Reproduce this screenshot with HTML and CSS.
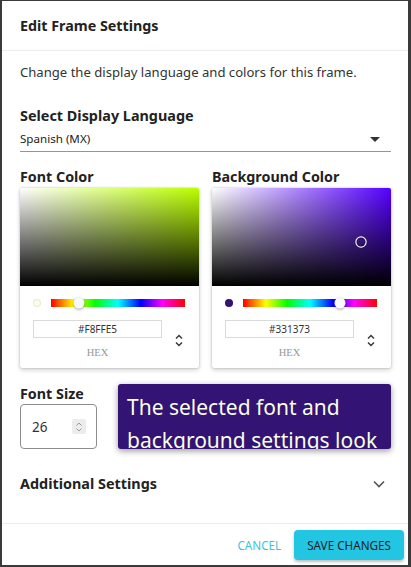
FILE: index.html
```html
<!DOCTYPE html>
<html lang="en">
<head>
<meta charset="utf-8">
<title>Edit Frame Settings</title>
<link rel="stylesheet" href="styles.css">
</head>
<body>
<div class="dialog">
  <div class="header">Edit Frame Settings</div>
  <div class="content">
    <p class="desc">Change the display language and colors for this frame.</p>
    <div class="section-label">Select Display Language</div>
    <div class="select">
      <span>Spanish (MX)</span>
      <span class="caret"></span>
    </div>

    <div class="colors">
      <div class="color-col">
        <div class="col-label">Font Color</div>
        <div class="picker">
          <div class="sat" style="background: linear-gradient(to top, #000, rgba(0,0,0,0)), linear-gradient(to right, #fff, hsl(76, 100%, 50%));"></div>
          <div class="controls">
            <div class="hue-row">
              <span class="swatch" style="background: #F8FFE5;"></span>
              <div class="hue">
                <span class="hue-thumb" style="left: 21%;"></span>
              </div>
            </div>
            <div class="fields">
              <div class="field">
                <div class="hex-input">#F8FFE5</div>
                <div class="hex-label">HEX</div>
              </div>
              <div class="toggle">
                <svg width="8" height="13" viewBox="0 0 8 13"><path d="M1 4.5 L4 1.5 L7 4.5" fill="none" stroke="#333" stroke-width="1.4"/><path d="M1 8.5 L4 11.5 L7 8.5" fill="none" stroke="#333" stroke-width="1.4"/></svg>
              </div>
            </div>
          </div>
        </div>
      </div>
      <div class="color-col">
        <div class="col-label">Background Color</div>
        <div class="picker">
          <div class="sat" style="background: linear-gradient(to top, #000, rgba(0,0,0,0)), linear-gradient(to right, #fff, hsl(260, 100%, 50%));">
            <span class="sat-marker" style="left: 149px; top: 54px;"></span>
          </div>
          <div class="controls">
            <div class="hue-row">
              <span class="swatch" style="background: #331373;"></span>
              <div class="hue">
                <span class="hue-thumb" style="left: 72.2%;"></span>
              </div>
            </div>
            <div class="fields">
              <div class="field">
                <div class="hex-input">#331373</div>
                <div class="hex-label">HEX</div>
              </div>
              <div class="toggle">
                <svg width="8" height="13" viewBox="0 0 8 13"><path d="M1 4.5 L4 1.5 L7 4.5" fill="none" stroke="#333" stroke-width="1.4"/><path d="M1 8.5 L4 11.5 L7 8.5" fill="none" stroke="#333" stroke-width="1.4"/></svg>
              </div>
            </div>
          </div>
        </div>
      </div>
    </div>

    <div class="size-row">
      <div class="size-col">
        <div class="col-label">Font Size</div>
        <div class="num-input">
          <span>26</span>
          <span class="spinner">
            <svg width="8" height="12" viewBox="0 0 8 12"><path d="M1.5 4.5 L4 2 L6.5 4.5" fill="none" stroke="#9a9a9a" stroke-width="1"/><path d="M1.5 7.5 L4 10 L6.5 7.5" fill="none" stroke="#9a9a9a" stroke-width="1"/></svg>
          </span>
        </div>
      </div>
      <div class="preview">The selected font and background settings look like this.</div>
    </div>

    <div class="additional">
      <span>Additional Settings</span>
      <svg class="chev" width="12" height="8" viewBox="0 0 12 8"><path d="M1 1.5 L6 6.5 L11 1.5" fill="none" stroke="#555" stroke-width="1.6"/></svg>
    </div>
  </div>
  <div class="footer">
    <button class="btn-text">Cancel</button>
    <button class="btn-primary">Save Changes</button>
  </div>
</div>
</body>
</html>
```

FILE: styles.css
```css
html, body {
  margin: 0;
  padding: 0;
}
body {
  background: #3a3a3a;
  width: 411px;
  height: 567px;
  overflow: hidden;
  font-family: "Noto Sans", "Open Sans", sans-serif;
  color: #222;
}
.dialog {
  margin: 1px 3px 0 2px;
  width: 406px;
  height: 564px;
  background: #fff;
  display: flex;
  flex-direction: column;
  box-sizing: border-box;
}
.header {
  height: 49px;
  border-bottom: 1px solid #ececec;
  padding-left: 18px;
  display: flex;
  align-items: center;
  font-size: 14.3px;
  font-weight: 700;
  color: #222;
}
.content {
  flex: 1;
  padding: 0 17px 0 18px;
}
.desc {
  margin: 11px 0 0;
  font-size: 13.1px;
  line-height: 20px;
  color: #333;
}
.section-label {
  margin-top: 23px;
  font-size: 14.4px;
  line-height: 22px;
  font-weight: 700;
}
.select {
  margin-top: 3px;
  display: flex;
  justify-content: space-between;
  align-items: center;
  font-size: 11.6px;
  line-height: 18px;
  padding-bottom: 3px;
  border-bottom: 1px solid #8f94ab;
  color: #222;
}
.caret {
  width: 0;
  height: 0;
  border-left: 5px solid transparent;
  border-right: 5px solid transparent;
  border-top: 5px solid #333;
  margin-right: 11px;
}
.colors {
  display: grid;
  grid-template-columns: 179px 179px;
  column-gap: 13px;
  margin-top: 15px;
}
.col-label {
  font-size: 14.3px;
  line-height: 20px;
  font-weight: 700;
  margin-bottom: 1px;
}
.picker {
  width: 179px;
  height: 180px;
  background: #fff;
  border-radius: 2px;
  box-shadow: 0 0 2px rgba(0,0,0,0.25), 0 2px 5px rgba(0,0,0,0.18);
  overflow: hidden;
}
.sat {
  position: relative;
  height: 98px;
  overflow: hidden;
}
.sat-marker {
  position: absolute;
  width: 9px;
  height: 9px;
  border-radius: 50%;
  transform: translate(-50%, -50%);
  box-shadow: 0 0 0 1.2px #fff, inset 0 0 1px 1px rgba(0,0,0,0.3);
}
.controls {
  padding: 13px 14px 9px 13px;
}
.hue-row {
  display: flex;
  align-items: center;
  height: 8px;
}
.swatch {
  width: 8px;
  height: 8px;
  border-radius: 50%;
  flex: none;
  box-shadow: inset 0 0 0 1px rgba(0,0,0,0.08);
}
.hue {
  position: relative;
  flex: 1;
  height: 8px;
  margin-left: 10px;
  background: linear-gradient(to right, #f00 0%, #ff0 17%, #0f0 33%, #0ff 50%, #00f 67%, #f0f 83%, #f00 100%);
}
.hue-thumb {
  position: absolute;
  top: 50%;
  width: 11px;
  height: 11px;
  border-radius: 50%;
  background: #f8f8f8;
  transform: translate(-50%, -50%);
  box-shadow: 0 1px 3px rgba(0,0,0,0.37);
}
.fields {
  display: flex;
  margin-top: 13px;
  margin-right: -11px;
}
.field {
  flex: 0 0 129px;
}
.hex-input {
  height: 18px;
  line-height: 18px;
  box-shadow: inset 0 0 0 1px #dadada;
  text-align: center;
  font-size: 10px;
  color: #333;
}
.hex-label {
  margin-top: 8px;
  font-family: "Liberation Serif", serif;
  font-size: 10.5px;
  line-height: 14px;
  color: #969696;
  text-align: center;
}
.toggle {
  flex: 1;
  display: flex;
  justify-content: center;
  padding-top: 14px;
}
.size-row {
  display: flex;
  gap: 21px;
  margin-top: 16px;
}
.size-col {
  flex: none;
  width: 77px;
}
.size-col .col-label {
  margin-bottom: 0;
}
.num-input {
  box-sizing: border-box;
  height: 45px;
  border: 1px solid #8c8c8c;
  border-radius: 4px;
  padding-left: 11px;
  display: flex;
  align-items: center;
  font-size: 13.5px;
  color: #333;
}
.spinner {
  margin-left: auto;
  margin-right: 10px;
  width: 14px;
  height: 15px;
  background: #ececec;
  border-radius: 2px;
  display: flex;
  align-items: center;
  justify-content: center;
}
.preview {
  flex: 1;
  height: 65px;
  box-sizing: border-box;
  padding: 7px 9px 6px;
  background: #331373;
  color: #F8FFE5;
  font-size: 21px;
  line-height: 33px;
  overflow: hidden;
  border-radius: 3px;
  box-shadow: 0 2px 6px rgba(0,0,0,0.4);
}
.additional {
  margin-top: 25px;
  display: flex;
  justify-content: space-between;
  align-items: center;
  font-size: 14.4px;
  line-height: 20px;
  font-weight: 700;
}
.chev {
  margin-right: 6px;
}
.footer {
  border-top: 1px solid #ececec;
  padding: 6px 4px 5px;
  display: flex;
  justify-content: flex-end;
  align-items: center;
  gap: 5px;
}
button {
  font-family: "Noto Sans", "Open Sans", sans-serif;
  text-transform: uppercase;
  font-size: 11.7px;
  border: none;
  cursor: pointer;
}
.btn-text {
  background: none;
  color: #3cc3e2;
  padding: 0 8px;
  height: 30px;
}
.btn-primary {
  background: #22c6e2;
  color: #1e1e1e;
  height: 30px;
  padding: 0 13px;
  border-radius: 4px;
  box-shadow: 0 2px 3px rgba(0,0,0,0.25);
}
```
